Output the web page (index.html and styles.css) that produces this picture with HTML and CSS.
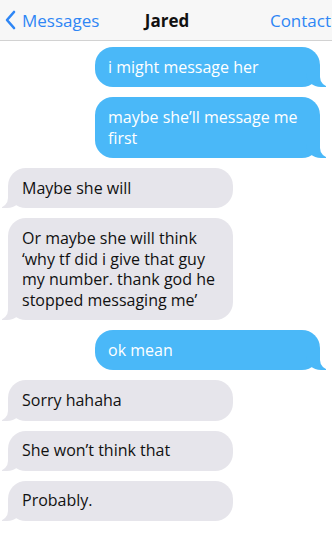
FILE: index.html
```html
<!DOCTYPE html>
<html>
<head>
<meta charset="utf-8">
<link rel="stylesheet" href="styles.css">
</head>
<body>
<header class="bar">
  <div class="back">
    <svg class="chev" width="12" height="20" viewBox="0 0 12 20"><path d="M10 2 L3 10 L10 18" fill="none" stroke="#2e86f5" stroke-width="2.6" stroke-linecap="round" stroke-linejoin="round"/></svg>
    <span>Messages</span>
  </div>
  <div class="title">Jared</div>
  <div class="contact">Contact</div>
</header>
<main class="thread">
  <div class="msg sent">i might message her</div>
  <div class="msg sent">maybe she’ll message me first</div>
  <div class="msg recv">Maybe she will</div>
  <div class="msg recv">Or maybe she will think ‘why tf did i give that guy my number. thank god he stopped messaging me’</div>
  <div class="msg sent">ok mean</div>
  <div class="msg recv">Sorry hahaha</div>
  <div class="msg recv">She won’t think that</div>
  <div class="msg recv">Probably.</div>
</main>
</body>
</html>
```

FILE: styles.css
```css
* { box-sizing: border-box; }
html, body { margin: 0; padding: 0; background: #fff; }
body {
  width: 332px;
  height: 534px;
  overflow: hidden;
  font-family: "Open Sans", "Noto Sans", sans-serif;
}
.bar {
  height: 41px;
  background: #f7f7f7;
  border-bottom: 1px solid #d2d2d2;
  display: flex;
  align-items: center;
  position: relative;
  font-size: 17px;
}
.back {
  display: flex;
  align-items: center;
  color: #2e86f5;
  padding-left: 4px;
  gap: 6px;
}
.chev { display: block; }
.title {
  position: absolute;
  left: 0; right: 0;
  text-align: center;
  font-weight: 700;
  color: #111;
  pointer-events: none;
  padding-left: 2px;
}
.contact {
  margin-left: auto;
  color: #2e86f5;
  margin-right: 1px;
  white-space: nowrap;
}
.thread {
  display: flex;
  flex-direction: column;
  gap: 10px;
  padding-top: 6px;
}
.msg {
  position: relative;
  width: 225px;
  font-size: 16px;
  line-height: 20.65px;
  padding: 9.75px 14px 9.75px 14px;
  border-radius: 18px;
}
.sent {
  align-self: flex-end;
  margin-right: 12px;
  background: #4ab8f8;
  color: #fff;
  padding-left: 13px;
}
.recv {
  align-self: flex-start;
  margin-left: 8px;
  background: #e6e5eb;
  color: #111;
}
.sent::before {
  content: "";
  position: absolute;
  bottom: 0;
  right: -6px;
  width: 20px;
  height: 18px;
  background: #4ab8f8;
  border-bottom-left-radius: 15px 14px;
}
.sent::after {
  content: "";
  position: absolute;
  bottom: 0;
  right: -26px;
  width: 26px;
  height: 20px;
  background: #fff;
  border-bottom-left-radius: 10px;
}
.recv::before {
  content: "";
  position: absolute;
  bottom: 0;
  left: -6px;
  width: 20px;
  height: 18px;
  background: #e6e5eb;
  border-bottom-right-radius: 15px 14px;
}
.recv::after {
  content: "";
  position: absolute;
  bottom: 0;
  left: -26px;
  width: 26px;
  height: 20px;
  background: #fff;
  border-bottom-right-radius: 10px;
}
```
